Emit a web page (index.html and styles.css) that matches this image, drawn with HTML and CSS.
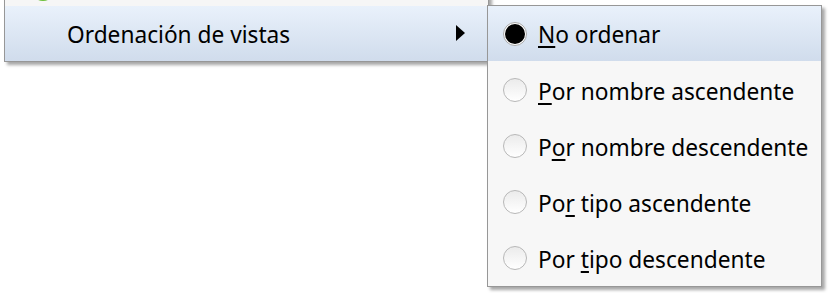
FILE: index.html
```html
<!DOCTYPE html>
<html lang="es">
<head>
<meta charset="utf-8">
<title>Ordenación de vistas</title>
<link rel="stylesheet" href="styles.css">
</head>
<body>
<div class="desk">
  <div class="menu main-menu">
    <div class="item">
      <span class="app-icon"></span>
    </div>
    <div class="item hot">
      <span class="label">Ordenación de vistas</span>
      <svg class="arrow" width="9" height="16" viewBox="0 0 9 16"><polygon points="0,0 9,8 0,16" fill="#000"/></svg>
    </div>
  </div>
  <div class="menu sub-menu">
    <div class="item hot">
      <span class="radio checked"><span class="dot"></span></span>
      <span class="label"><u>N</u>o ordenar</span>
    </div>
    <div class="item">
      <span class="radio"></span>
      <span class="label"><u>P</u>or nombre ascendente</span>
    </div>
    <div class="item">
      <span class="radio"></span>
      <span class="label">P<u>o</u>r nombre descendente</span>
    </div>
    <div class="item">
      <span class="radio"></span>
      <span class="label">Po<u>r</u> tipo ascendente</span>
    </div>
    <div class="item">
      <span class="radio"></span>
      <span class="label">Por <u>t</u>ipo descendente</span>
    </div>
  </div>
</div>
</body>
</html>
```
FILE: styles.css
```css
html, body {
  margin: 0;
  padding: 0;
  background: #ffffff;
}
.desk {
  position: relative;
  width: 832px;
  height: 293px;
  overflow: hidden;
  font-family: "Noto Sans", "Open Sans", sans-serif;
  font-size: 22.7px;
  color: #000;
}
.menu {
  position: absolute;
  box-sizing: border-box;
  border: 1px solid #979797;
  box-shadow: 3px 3px 3px rgba(0, 0, 0, 0.35);
  display: flex;
  flex-direction: column;
}
.main-menu {
  left: 4px;
  top: -50px;
  width: 485px;
  background: #f6f6f6;
}
.main-menu .item {
  height: 55px;
  display: flex;
  align-items: center;
  padding: 0 23px 0 62px;
  position: relative;
}
.main-menu .item.hot {
  background: linear-gradient(#e9f1fb, #d0dcec);
}
.app-icon {
  position: absolute;
  left: 26px;
  bottom: 5px;
  width: 24px;
  height: 24px;
  border-radius: 50%;
  background: #6cbf3a;
}
.arrow {
  margin-left: auto;
  margin-top: -2px;
}
.sub-menu {
  left: 487px;
  top: 5px;
  width: 335px;
  height: 282px;
  background: #f7f7f7;
}
.sub-menu .item {
  height: 56px;
  display: flex;
  align-items: center;
  padding-left: 15px;
  gap: 11px;
}
.sub-menu .item.hot {
  background: linear-gradient(#e9f1fb, #d0dcec);
  height: 55px;
  margin-bottom: 1px;
}
.radio {
  box-sizing: border-box;
  width: 24px;
  height: 24px;
  border-radius: 50%;
  border: 1px solid #b8b8b8;
  background: linear-gradient(#ebebeb, #ffffff);
  display: flex;
  align-items: center;
  justify-content: center;
  flex: none;
}
.radio.checked {
  border-color: #a8a8a8;
  background: #ffffff;
}
.dot {
  width: 20px;
  height: 20px;
  border-radius: 50%;
  background: #000;
}
.label {
  white-space: nowrap;
  line-height: 1;
  margin-top: 4px;
}
.label u {
  text-underline-offset: 3px;
  text-decoration-thickness: 1.5px;
}
```
